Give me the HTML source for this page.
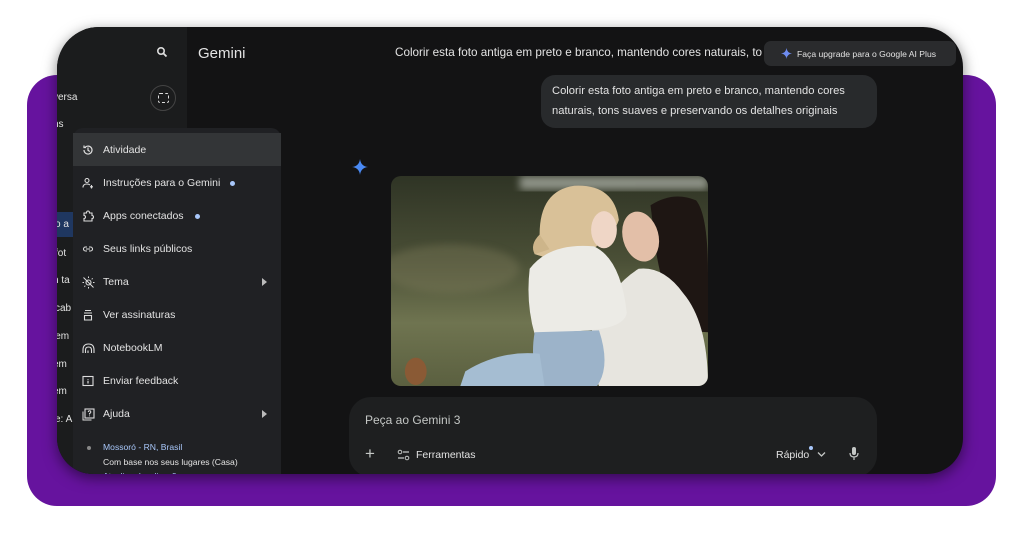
<!DOCTYPE html>
<html><head><meta charset="utf-8"><style>
*{margin:0;padding:0;box-sizing:border-box}
body{width:1024px;height:536px;background:#fff;position:relative;overflow:hidden;font-family:"Liberation Sans",sans-serif;color:#e3e3e3}
.purple{position:absolute;left:27px;top:75px;width:969px;height:431px;background:#66139e;border-radius:30px}
.win{position:absolute;left:57px;top:27px;width:906px;height:447px;background:#131314;border-radius:42px 40px 36px 36px;overflow:hidden;box-shadow:0 4px 14px rgba(0,0,0,.5)}
.side{position:absolute;left:0;top:0;width:130px;height:447px;background:#1b1c1d}
.t{position:absolute;white-space:nowrap}
.menu{position:absolute;left:16px;top:101px;width:208px;height:360px;background:#202124;border-radius:10px 10px 0 0}
.mi{position:absolute;left:0;width:208px;height:33px;font-size:10.5px;color:#e3e3e3}
.mi span{position:absolute;left:30px;top:11px}
.mi svg{position:absolute;left:9px;top:11px}
.dot{position:absolute;width:5px;height:5px;border-radius:50%;background:#a8c7fa}
</style></head><body>
<div class="purple"></div>
<div class="win">
 <div class="side">
  <svg class="t" style="left:99px;top:19px" width="12" height="12" viewBox="0 0 12 12"><circle cx="5" cy="5" r="3.2" fill="none" stroke="#ddd" stroke-width="1.6"/><path d="M7.4 7.4L10.5 10.5" stroke="#ddd" stroke-width="1.8"/></svg>
  <div class="t" style="left:93px;top:58px;width:26px;height:26px;border-radius:50%;border:1px solid #444"></div>
  <div class="t" style="left:101px;top:66px;width:11px;height:10px;border:1.5px dashed #ddd;border-radius:2px"></div>
  <div class="t" style="left:-4px;top:65px;font-size:10px">versa</div>
  <div class="t" style="left:-4px;top:92px;font-size:10px">ns</div>
  <div class="t" style="left:0;top:185px;width:16px;height:25px;background:#1f3760"></div>
  <div class="t" style="left:-2px;top:192px;font-size:10px">o a</div>
  <div class="t" style="left:-2px;top:221px;font-size:10px">fot</div>
  <div class="t" style="left:-4px;top:248px;font-size:10px">n ta</div>
  <div class="t" style="left:-2px;top:276px;font-size:10px">cab</div>
  <div class="t" style="left:-4px;top:304px;font-size:10px">jem</div>
  <div class="t" style="left:-4px;top:332px;font-size:10px">em</div>
  <div class="t" style="left:-4px;top:359px;font-size:10px">em</div>
  <div class="t" style="left:-2px;top:387px;font-size:10px">e: A</div>
 </div>
 <div class="t" style="left:141px;top:18px;font-size:15px;color:#e3e3e3">Gemini</div>
 <div class="t" style="left:338px;top:19px;font-size:11.7px;color:#e3e3e3">Colorir esta foto antiga em preto e branco, mantendo cores naturais, to</div>
 <div class="t" style="left:707px;top:14px;width:192px;height:25px;background:#2a2b2d;border-radius:7px;font-size:8.6px"><svg style="position:absolute;left:17px;top:7px" width="11" height="11" viewBox="0 0 10 10"><path d="M5 0Q5.5 4.5 10 5Q5.5 5.5 5 10Q4.5 5.5 0 5Q4.5 4.5 5 0Z" fill="#6e8cf0"/></svg><span style="position:absolute;left:33px;top:8px">Faça upgrade para o Google AI Plus</span></div>
 <div class="t" style="left:484px;top:48px;width:336px;height:53px;background:#282a2c;border-radius:14px;font-size:11.2px;line-height:20px;padding:6px 11px">Colorir esta foto antiga em preto e branco, mantendo cores<br>naturais, tons suaves e preservando os detalhes originais</div>
 <svg class="t" style="left:295px;top:132px" width="16" height="16" viewBox="0 0 10 10"><path d="M5 0Q5.5 4.5 10 5Q5.5 5.5 5 10Q4.5 5.5 0 5Q4.5 4.5 5 0Z" fill="#4a8af4"/></svg>
 <svg class="t" style="left:334px;top:149px;border-radius:10px" width="317" height="210" viewBox="0 0 320 215" preserveAspectRatio="none">
  <defs><linearGradient id="bg" x1="0" y1="0" x2="0" y2="1"><stop offset="0" stop-color="#2f3425"/><stop offset=".4" stop-color="#4a4f36"/><stop offset=".7" stop-color="#6f7450"/><stop offset="1" stop-color="#5b6040"/></linearGradient>
  <filter id="bl"><feGaussianBlur stdDeviation="4"/></filter></defs>
  <rect width="320" height="215" fill="url(#bg)"/>
  <rect x="130" y="0" width="190" height="14" fill="#b5b9b0" opacity=".7" filter="url(#bl)"/>
  <ellipse cx="60" cy="95" rx="70" ry="25" fill="#7d7a5a" opacity=".4" filter="url(#bl)"/>
  <path d="M262 30Q285 15 308 25Q320 40 320 100L320 160L290 158Q275 120 268 80Z" fill="#1e1613"/>
  <ellipse cx="252" cy="62" rx="18" ry="26" fill="#e3bfa8" transform="rotate(-15 252 62)"/>
  <path d="M250 95Q275 92 295 120Q320 150 320 215L210 215Q195 180 205 150Q225 110 250 95Z" fill="#e7e5df"/>
  <path d="M150 60Q150 15 185 10Q225 8 230 45Q225 60 210 70L185 90Q160 85 145 80Z" fill="#d9c198"/>
  <path d="M145 80Q140 70 150 60L160 75Z" fill="#cdb58a"/>
  <ellipse cx="215" cy="55" rx="13" ry="19" fill="#efd6c6"/>
  <path d="M140 95Q160 68 205 72Q232 85 238 140Q236 155 200 158L145 162Q136 130 140 95Z" fill="#ecebe6"/>
  <path d="M145 160L210 158Q222 195 208 215L150 215Q140 190 145 160Z" fill="#9cb3c9"/>
  <path d="M75 200Q110 178 150 182L155 215L70 215Z" fill="#a5bdd2"/>
  <ellipse cx="25" cy="200" rx="11" ry="14" fill="#8a5a35"/>
 </svg>
 <div class="t" style="left:292px;top:370px;width:528px;height:80px;background:#1e1f20;border-radius:22px">
  <div class="t" style="left:16px;top:16px;font-size:12px;color:#c4c7c5">Peça ao Gemini 3</div>
  <div class="t" style="left:16px;top:47px;font-size:17px;color:#c4c7c5">+</div>
  <svg class="t" style="left:48px;top:52px" width="13" height="12" viewBox="0 0 13 12"><circle cx="3" cy="3" r="1.8" fill="none" stroke="#c4c7c5"/><path d="M6 3H12M1 9H7" stroke="#c4c7c5" stroke-width="1.3"/><circle cx="10" cy="9" r="1.8" fill="none" stroke="#c4c7c5"/></svg>
  <div class="t" style="left:67px;top:52px;font-size:10.5px;color:#e3e3e3">Ferramentas</div>
  <div class="t" style="left:427px;top:52px;font-size:10.5px;color:#e3e3e3">Rápido</div>
  <div class="dot" style="left:460px;top:49px;width:4px;height:4px"></div>
  <svg class="t" style="left:468px;top:54px" width="9" height="7" viewBox="0 0 9 7"><path d="M1 1.5L4.5 5L8 1.5" fill="none" stroke="#c4c7c5" stroke-width="1.3"/></svg>
  <svg class="t" style="left:500px;top:50px" width="10" height="14" viewBox="0 0 10 14"><rect x="3" y="0" width="4" height="8" rx="2" fill="#c4c7c5"/><path d="M1 6Q1 10 5 10Q9 10 9 6M5 10V13" fill="none" stroke="#c4c7c5" stroke-width="1.2"/></svg>
 </div>
 <div class="menu">
  <div class="mi" style="top:5px;background:#333537"><svg width="12" height="12" viewBox="0 0 12 12"><path d="M2 6A4 4 0 1 0 3.2 3.2M2 1.5V3.5H4M6 3.5V6.3L7.8 7.5" fill="none" stroke="#ddd" stroke-width="1.2"/></svg><span>Atividade</span></div>
  <div class="mi" style="top:38px"><svg width="12" height="12" viewBox="0 0 12 12"><circle cx="5" cy="3.5" r="2" fill="none" stroke="#ddd" stroke-width="1.1"/><path d="M1 10.5Q1 7 5 7Q7 7 8 8M9.5 8V11.5M8 9.8H11" fill="none" stroke="#ddd" stroke-width="1.1"/></svg><span>Instruções para o Gemini</span><div class="dot" style="left:157px;top:15px"></div></div>
  <div class="mi" style="top:71px"><svg width="12" height="12" viewBox="0 0 12 12"><path d="M2 3H4.5Q4.5 1 6 1Q7.5 1 7.5 3H10V5.5Q11.5 5.5 11.5 7Q11.5 8.5 10 8.5V11H2V8.5Q3.5 8.5 3.5 7Q3.5 5.5 2 5.5Z" fill="none" stroke="#ddd" stroke-width="1.1"/></svg><span>Apps conectados</span><div class="dot" style="left:122px;top:15px"></div></div>
  <div class="mi" style="top:104px"><svg width="12" height="12" viewBox="0 0 12 12"><path d="M5 4H3.5A2 2 0 0 0 3.5 8H5M7 4H8.5A2 2 0 0 1 8.5 8H7M4 6H8" fill="none" stroke="#ddd" stroke-width="1.1"/></svg><span>Seus links públicos</span></div>
  <div class="mi" style="top:137px"><svg width="13" height="13" viewBox="0 0 13 13"><circle cx="6.5" cy="6.5" r="2.5" fill="none" stroke="#ddd" stroke-width="1.1"/><path d="M6.5 0.5V2M6.5 11V12.5M0.5 6.5H2M11 6.5H12.5M2.3 2.3L3.3 3.3M9.7 9.7L10.7 10.7M2.3 10.7L3.3 9.7M9.7 3.3L10.7 2.3M1.5 1.5L11.5 11.5" stroke="#ddd" stroke-width="1"/></svg><span>Tema</span><svg style="left:189px;top:13px" width="5" height="8" viewBox="0 0 5 8"><path d="M0 0L5 4L0 8Z" fill="#bbb"/></svg></div>
  <div class="mi" style="top:170px"><svg width="12" height="12" viewBox="0 0 12 12"><path d="M3 1.5H9M2 4H10M2.5 6.5H9.5V11H2.5Z" fill="none" stroke="#ddd" stroke-width="1.1"/></svg><span>Ver assinaturas</span></div>
  <div class="mi" style="top:203px"><svg width="13" height="12" viewBox="0 0 13 12"><path d="M1 11V8Q1 2 6.5 2Q12 2 12 8V11M3.5 11V8Q3.5 5 6.5 5Q9.5 5 9.5 8V11M6 11V8.5" fill="none" stroke="#ddd" stroke-width="1.1"/></svg><span>NotebookLM</span></div>
  <div class="mi" style="top:236px"><svg width="12" height="12" viewBox="0 0 12 12"><rect x="1" y="1.5" width="10" height="9" fill="none" stroke="#ddd" stroke-width="1.1"/><path d="M6 4V4.8M6 5.8V8.5" stroke="#ddd" stroke-width="1.2"/></svg><span>Enviar feedback</span></div>
  <div class="mi" style="top:269px"><svg width="13" height="13" viewBox="0 0 13 13"><rect x="3" y="1" width="9" height="9" fill="none" stroke="#ddd" stroke-width="1.1"/><path d="M1 3.5V12H9.5M6.2 4Q6.5 2.8 7.5 2.8Q8.8 2.8 8.8 4Q8.8 5 7.5 5.5V6.5M7.5 7.5V8.3" fill="none" stroke="#ddd" stroke-width="1"/></svg><span>Ajuda</span><svg style="left:189px;top:13px" width="5" height="8" viewBox="0 0 5 8"><path d="M0 0L5 4L0 8Z" fill="#bbb"/></svg></div>
  <div class="dot" style="left:14px;top:318px;width:4px;height:4px;background:#888"></div>
  <div class="t" style="left:30px;top:314px;font-size:8.6px;color:#a8c7fa">Mossoró - RN, Brasil</div>
  <div class="t" style="left:30px;top:329px;font-size:8.6px;color:#e3e3e3">Com base nos seus lugares (Casa)</div>
  <div class="t" style="left:30px;top:343px;font-size:8.6px;color:#a8c7fa">Atualizar localização</div>
 </div>
</div>
</body></html>
